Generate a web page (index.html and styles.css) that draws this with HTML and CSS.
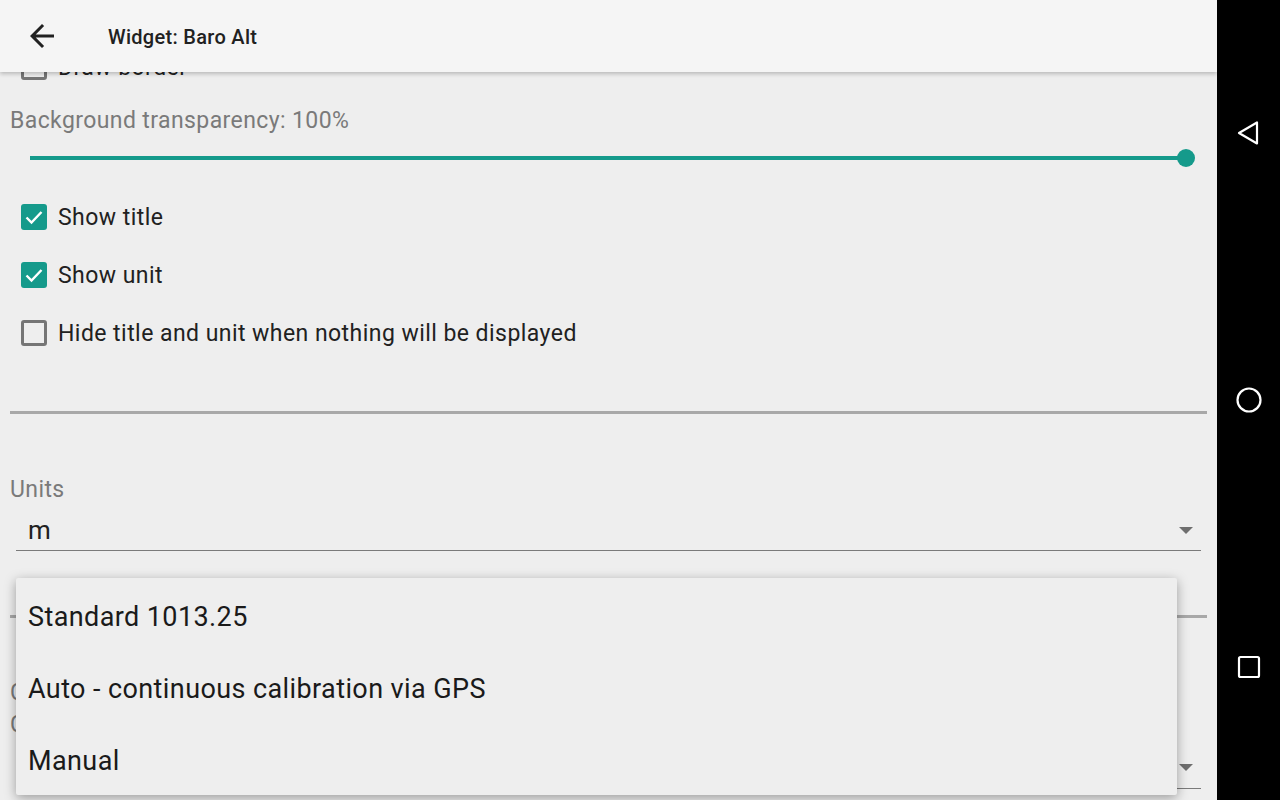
FILE: index.html
```html
<!DOCTYPE html>
<html lang="en">
<head>
    <meta charset="UTF-8">
    <meta name="viewport" content="width=device-width, initial-scale=1.0">
    <title>Widget: Baro Alt</title>
    <link rel="stylesheet" href="styles.css">
</head>
<body>
    <div class="screen">
        <div class="app">
            <div class="toolbar">
                <svg class="back-arrow" viewBox="0 0 24 24" width="36" height="36">
                    <path d="M20 11H7.83l5.59-5.59L12 4l-8 8 8 8 1.41-1.41L7.83 13H20v-2z" fill="#212121"/>
                </svg>
                <div class="toolbar-title">Widget: Baro Alt</div>
            </div>

            <div class="content">
                <div class="check-row">
                    <span class="checkbox"></span>
                    <span>Draw border</span>
                </div>

                <div class="field-label first">Background transparency: 100%</div>
                <div class="slider">
                    <div class="slider-track"></div>
                    <div class="slider-thumb"></div>
                </div>

                <div class="check-list">
                    <div class="check-row">
                        <span class="checkbox checked">
                            <svg viewBox="0 0 24 24" width="24" height="24"><path d="M4.5 12.5l5 5L19.5 7" fill="none" stroke="#fff" stroke-width="2.4"/></svg>
                        </span>
                        <span>Show title</span>
                    </div>
                    <div class="check-row">
                        <span class="checkbox checked">
                            <svg viewBox="0 0 24 24" width="24" height="24"><path d="M4.5 12.5l5 5L19.5 7" fill="none" stroke="#fff" stroke-width="2.4"/></svg>
                        </span>
                        <span>Show unit</span>
                    </div>
                    <div class="check-row">
                        <span class="checkbox"></span>
                        <span>Hide title and unit when nothing will be displayed</span>
                    </div>
                </div>

                <div class="divider first-divider"></div>

                <div class="field-label units-label">Units</div>
                <div class="spinner">
                    <span class="spinner-value">m</span>
                    <span class="spinner-arrow"></span>
                </div>

                <div class="divider second-divider"></div>

                <div class="field-label calib-label">C</div>
                <div class="field-label calib-sub">C</div>
                <div class="spinner lower">
                    <span class="spinner-value"></span>
                    <span class="spinner-arrow"></span>
                </div>
            </div>

            <div class="popup">
                <div class="popup-item">Standard 1013.25</div>
                <div class="popup-item">Auto - continuous calibration via GPS</div>
                <div class="popup-item">Manual</div>
            </div>
        </div>

        <div class="navbar">
            <svg viewBox="0 0 28 28" width="28" height="28">
                <path d="M22 3.5v21L4 14z" fill="none" stroke="#fff" stroke-width="2.2" stroke-linejoin="round"/>
            </svg>
            <svg viewBox="0 0 28 28" width="28" height="28">
                <circle cx="14" cy="14" r="11.5" fill="none" stroke="#fff" stroke-width="2.2"/>
            </svg>
            <svg viewBox="0 0 28 28" width="28" height="28">
                <rect x="4" y="4" width="20" height="20" rx="1.5" fill="none" stroke="#fff" stroke-width="2.2"/>
            </svg>
        </div>
    </div>
</body>
</html>
```

FILE: styles.css
```css
body {
    margin: 0;
    background-color: #000;
    font-family: Roboto, "Noto Sans", sans-serif;
}
.screen {
    display: flex;
    width: 1280px;
    height: 800px;
    overflow: hidden;
}
.app {
    position: relative;
    width: 1217px;
    height: 800px;
    background-color: #eeeeee;
    overflow: hidden;
}
.toolbar {
    position: absolute;
    top: 0;
    left: 0;
    right: 0;
    height: 72px;
    display: flex;
    align-items: center;
    background-color: #f5f5f5;
    box-shadow: 0 2px 4px rgba(0,0,0,0.22);
    z-index: 2;
}
.back-arrow {
    margin-left: 24px;
}
.toolbar-title {
    margin-left: 48px;
    padding-top: 1px;
    font-size: 20px;
    font-weight: 500;
    letter-spacing: 0.3px;
    color: #212121;
}
.content {
    padding: 38px 10px 0 10px;
}
.check-row {
    height: 58px;
    display: flex;
    align-items: center;
    gap: 11px;
    padding-left: 11px;
    font-size: 23px;
    letter-spacing: 0.45px;
    color: #212121;
}
.checkbox {
    box-sizing: border-box;
    width: 26px;
    height: 26px;
    border: 3px solid #757575;
    border-radius: 3px;
    display: flex;
    align-items: center;
    justify-content: center;
}
.checkbox.checked {
    border: none;
    background-color: #159a8b;
}
.field-label {
    box-sizing: border-box;
    padding-top: 2px;
    font-size: 23px;
    letter-spacing: 0.4px;
    line-height: 30px;
    height: 30px;
    color: #7a7a7a;
}
.field-label.first {
    margin-top: 8px;
}
.slider {
    position: relative;
    height: 46px;
}
.slider-track {
    position: absolute;
    left: 20px;
    right: 21px;
    top: 22px;
    height: 4px;
    background-color: #159a8b;
}
.slider-thumb {
    position: absolute;
    left: 1167px;
    top: 15px;
    width: 18px;
    height: 18px;
    border-radius: 50%;
    background-color: #159a8b;
}
.check-list {
    margin-top: 8px;
}
.divider {
    height: 3px;
    background-color: #a8a8a8;
}
.first-divider {
    margin-top: 49px;
}
.units-label {
    margin-top: 59px;
}
.spinner {
    box-sizing: border-box;
    height: 48px;
    margin: 0 6px;
    padding: 7px 8px 0 12px;
    display: flex;
    align-items: center;
    justify-content: space-between;
    border-bottom: 1px solid #7a7a7a;
}
.spinner-value {
    font-size: 26px;
    color: #212121;
}
.spinner-arrow {
    width: 0;
    height: 0;
    border-left: 7px solid transparent;
    border-right: 7px solid transparent;
    border-top: 7px solid #6e6e6e;
}
.second-divider {
    margin-top: 64px;
}
.calib-label {
    margin-top: 57px;
    height: 32px;
    line-height: 32px;
}
.calib-sub {
    height: 32px;
    line-height: 32px;
}
.spinner.lower {
    height: 50px;
    margin-top: 0;
}
.popup {
    position: absolute;
    left: 16px;
    top: 578px;
    width: 1161px;
    height: 217px;
    box-sizing: border-box;
    padding-top: 3px;
    background-color: #eeeeee;
    border-radius: 2px;
    box-shadow: 0 3px 12px rgba(0,0,0,0.35);
    overflow: hidden;
    z-index: 3;
}
.popup-item {
    height: 72px;
    display: flex;
    align-items: center;
    padding-left: 12px;
    font-size: 27px;
    letter-spacing: 0.4px;
    color: #1a1a1a;
}
.navbar {
    flex: 1;
    display: flex;
    flex-direction: column;
    align-items: center;
    justify-content: space-around;
    background-color: #000;
}
```
